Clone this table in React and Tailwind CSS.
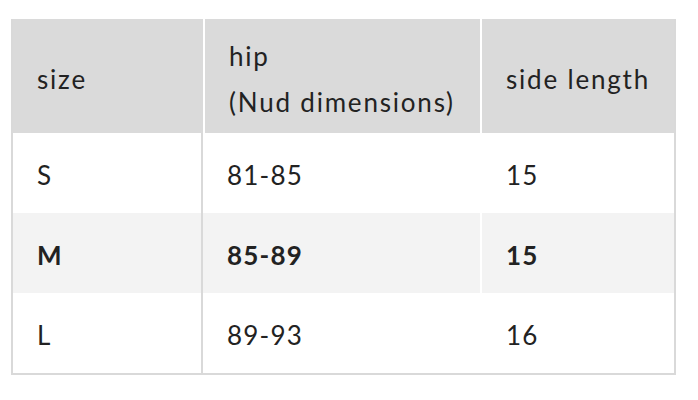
const rows = [
  { size: 'S', hip: '81-85', side: '15' },
  { size: 'M', hip: '85-89', side: '15', active: true },
  { size: 'L', hip: '89-93', side: '16' },
]

export default function App() {
  return (
    <div className="w-[698px] h-[400px] bg-white pt-[19px] pl-[11px]" style={{ fontFamily: 'Lato, "Open Sans", sans-serif' }}>
      <div className="w-[665px] border-2 border-t-0 border-l-2 border-[#d9d9d9] text-[26px] tracking-[1.2px] text-[#222]">
        {/* Header */}
        <div className="grid grid-cols-[190px_277px_1fr] h-[114px] bg-[#dadada] tracking-[1.8px]">
          <div className="flex items-center pl-[24px] pt-[6px]">size</div>
          <div className="flex flex-col justify-center pl-[24px] pt-[6px] border-l-2 border-white leading-[46px]">
            <span>hip</span>
            <span>(Nud dimensions)</span>
          </div>
          <div className="flex items-center pl-[24px] pt-[6px] border-l-2 border-white">side length</div>
        </div>

        {/* Body */}
        {rows.map(r => (
          <div
            key={r.size}
            className={`grid grid-cols-[190px_277px_1fr] h-[80px] ${r.active ? 'bg-[#f3f3f3] font-bold' : ''}`}
          >
            <div className="flex items-center pl-[24px] pt-[4px] border-r-2 border-[#d9d9d9]">{r.size}</div>
            <div className="flex items-center pl-[24px] pt-[4px]">{r.hip}</div>
            <div className="flex items-center pl-[24px] pt-[4px] border-l-2 border-white">{r.side}</div>
          </div>
        ))}
      </div>
    </div>
  )
}
